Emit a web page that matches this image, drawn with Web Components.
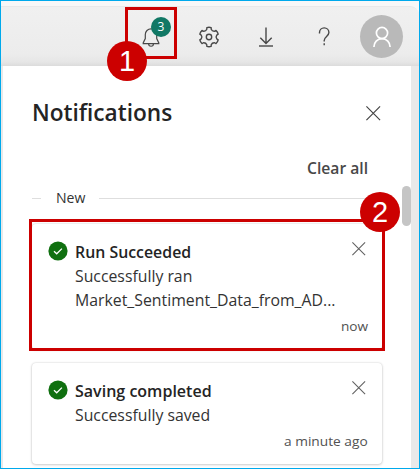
<!DOCTYPE html>
<html lang="en">
<head>
<meta charset="utf-8">
<title>Notifications</title>
<style>
html,body{margin:0;height:100%;overflow:hidden}
body{font-family:"Open Sans","Noto Sans",sans-serif;color:#242424}
</style>
</head>
<body>
<app-window></app-window>
<script>
const define = (name, html, setup) => customElements.define(name, class extends HTMLElement {
  connectedCallback() {
    if (this.shadowRoot) return;
    const t = document.createElement('template');
    t.innerHTML = html;
    this.attachShadow({mode: 'open'}).append(t.content.cloneNode(true));
    if (setup) setup(this, this.shadowRoot);
  }
});

// A single line of text condensed horizontally to the width in its "w" attribute.
define('fit-text', `<style>
:host{display:block;white-space:nowrap}
span{display:inline-block;transform-origin:0 50%}
</style><span></span>`, (el, root) => {
  const s = root.querySelector('span'), w = +el.getAttribute('w');
  s.textContent = el.getAttribute('text');
  el.style.width = w + 'px';
  s.style.transform = 'scaleX(' + w / s.offsetWidth + ')';
});

define('close-icon', `<style>:host{display:block}svg{display:block;width:100%;height:100%}</style>
<svg viewBox="0 0 14 14" fill="none" stroke="currentColor" stroke-width="1.1"><path d="M.4.4l13.2 13.2M13.6.4L.4 13.6"/></svg>`);

define('number-marker', `<style>
:host{display:grid;place-items:center;width:40px;height:40px;border-radius:50%;background:#c00;color:#fff;font:29px/40px "Liberation Sans",Arial,sans-serif}
</style><slot></slot>`);

define('top-bar', `<style>
:host{display:flex;align-items:center;box-sizing:border-box;height:60px;padding-right:16px;justify-content:flex-end;background:linear-gradient(#f0f0f0,#ececec 80%,#e6e6e6 93%,#dcdcdc);border-top:1px solid #e9e9e9;border-top-right-radius:9px;color:#484848}
svg{display:block;fill:none;stroke:currentColor}
.bell{position:relative;width:20px;height:22px;margin-right:37px}
.bell svg{margin-top:2px}
.count{position:absolute;left:10px;top:-9px;width:20px;height:20px;border-radius:50%;background:#117865;color:#fff;font-size:12px;line-height:20px;text-align:center}
.gear{margin-right:38px}.down{margin-right:41px}
.help{width:18px;margin-right:27px}
.avatar{width:43px;height:43px;border-radius:50%;background:#b9b9b9;display:grid;place-items:center;color:#fff}
</style>
<div class="bell"><svg width="20" height="20" viewBox="0 0 20 20" stroke-width="1.2"><path d="M10 .8a5.7 5.7 0 0 0-5.7 5.7v4.1L2.2 15v.7h15.6V15l-2.1-4.4V6.500A5.7 5.700 0 0 0 10 .8M7.600 15.800a2.450 2.450 0 0 0 4.900 0"/></svg><span class="count">3</span></div>
<svg class="gear" width="22" height="22" viewBox="0 0 22 22" stroke-width="1.4" stroke-linejoin="round"><path id="g"/><circle cx="11" cy="11" r="2.7"/></svg>
<svg class="down" width="16" height="22" viewBox="0 0 16 22" stroke-width="1.4"><path d="M8 1.500v15.500M2.300 11.700L8 17.400l5.700-5.700"/><path d="M1 20h14"/></svg>
<svg class="help" width="18" height="22" viewBox="0 0 18 22" stroke-width="1.4"><path d="M4.500 7.500V6.600a4.700 4.700 0 0 1 9.400 0c0 3.700-4.700 4.100-4.700 7.900v1M9.200 17.300v2"/></svg>
<div class="avatar"><svg width="20" height="22" viewBox="0 0 20 22" stroke-width="1.7"><circle cx="10" cy="7" r="5.600"/><path d="M1.900 21c0-4.700 3.400-8.300 8.100-8.300s8.100 3.600 8.100 8.300"/></svg></div>`, (el, root) => {
  // Six-toothed outline: each tooth has a flat crown between two rounded valleys.
  let d = '';
  const p = (r, a) => (11 + r * Math.sin(a * Math.PI / 180)).toFixed(2) + ' ' + (11 - r * Math.cos(a * Math.PI / 180)).toFixed(2);
  for (let i = 0; i < 6; i++) {
    const a = i * 60;
    d += (i ? 'L' : 'M') + p(9.6, a - 13) + 'Q' + p(10, a) + ' ' + p(9.6, a + 13) + 'L' + p(8, a + 16) + 'Q' + p(6.4, a + 30) + ' ' + p(8, a + 44);
  }
  root.querySelector('#g').setAttribute('d', d + 'Z');
});

define('notice-card', `<style>
:host{display:block;box-sizing:border-box;width:350px;padding:16px 14px 13px 16px;border-radius:4px;background:#fff;box-shadow:0 0 2px rgba(0,0,0,.18),0 1px 3px rgba(0,0,0,.16)}
.row{display:grid;grid-template-columns:20px 1fr 14px;column-gap:7px;padding-right:2px;font-size:15.800px;line-height:24px}
.ok{display:block;margin-top:1px}
close-icon{width:13.500px;height:13.500px;margin-top:2px;color:#616161}
.time{display:flex;justify-content:flex-end;margin-top:4px;font-size:13.400px;line-height:20px;color:#525252}
::slotted([slot=title]){font-weight:650}
::slotted(:not([slot])){color:#333}
</style>
<div class="row">
<svg class="ok" width="20" height="20" viewBox="0 0 20 20"><circle cx="10" cy="10" r="9.600" fill="#107010"/><path d="M6 10.200l2.700 2.600 5.200-5.200" fill="none" stroke="#fff" stroke-width="1.300"/></svg>
<div><slot name="title"></slot><slot></slot></div>
<close-icon></close-icon></div>
<div class="time"><slot name="time"></slot></div>`);

define('notification-panel', `<style>
:host{display:block;position:relative;box-sizing:border-box;width:408px;height:402px;padding:0 29px;background:#fff}
header{display:flex;justify-content:space-between;padding-top:28px;height:36px}
header fit-text{font-size:23.700px;line-height:36px;font-weight:650}
header close-icon{width:14.500px;height:14.500px;margin:12px 1.500px 0 0;color:#424242}
.clear{display:flex;justify-content:flex-end;margin-top:26px;padding-right:14px;font-size:15.800px;line-height:24px;font-weight:650;color:#484848}
.divider{display:flex;align-items:center;height:20px;margin-top:8px;font-size:13.600px;line-height:20px;color:#333}
.divider i{height:1px;background:#dedede}
.divider i:first-child{width:9px;margin-right:15px}
.divider i:last-child{flex:1;margin-left:14px}
.cards{display:grid;gap:14px;margin-top:16px}
.thumb{position:absolute;right:0;top:120px;width:9px;height:40px;border-radius:4.500px;background:#c5c5c5}
</style>
<header><fit-text text="Notifications" w="140.5"></fit-text><close-icon></close-icon></header>
<div class="clear"><fit-text text="Clear all" w="61.5"></fit-text></div>
<div class="divider"><i></i><fit-text text="New" w="29"></fit-text><i></i></div>
<div class="cards">
<notice-card><fit-text slot="title" text="Run Succeeded" w="116.500"></fit-text><fit-text text="Successfully ran" w="117"></fit-text><fit-text text="Market_Sentiment_Data_from_AD..." w="260.500"></fit-text><fit-text slot="time" text="now" w="27.500"></fit-text></notice-card>
<notice-card><fit-text slot="title" text="Saving completed" w="137"></fit-text><fit-text text="Successfully saved" w="135"></fit-text><fit-text slot="time" text="a minute ago" w="84"></fit-text></notice-card>
</div>
<div class="thumb"></div>`);

define('app-window', `<style>
:host{display:block;position:relative;box-sizing:border-box;width:420px;height:469px;border:1px solid #00a9ec;background:#f8f8f8;padding-top:5px;overflow:hidden}
.body{box-sizing:border-box;height:402px;padding-left:2px;background:#e9e9e9}
.frame{position:absolute;box-sizing:border-box;border:3px solid #c00}
.f1{left:124px;top:6px;width:52px;height:52px}
.f2{left:28px;top:218px;width:356px;height:132px}
number-marker{position:absolute}
.m1{left:106px;top:40px}.m2{left:359px;top:191px}
</style>
<top-bar></top-bar>
<div class="body"><notification-panel></notification-panel></div>
<div class="frame f1"></div><div class="frame f2"></div>
<number-marker class="m1">1</number-marker><number-marker class="m2">2</number-marker>`);
</script>
</body>
</html>
